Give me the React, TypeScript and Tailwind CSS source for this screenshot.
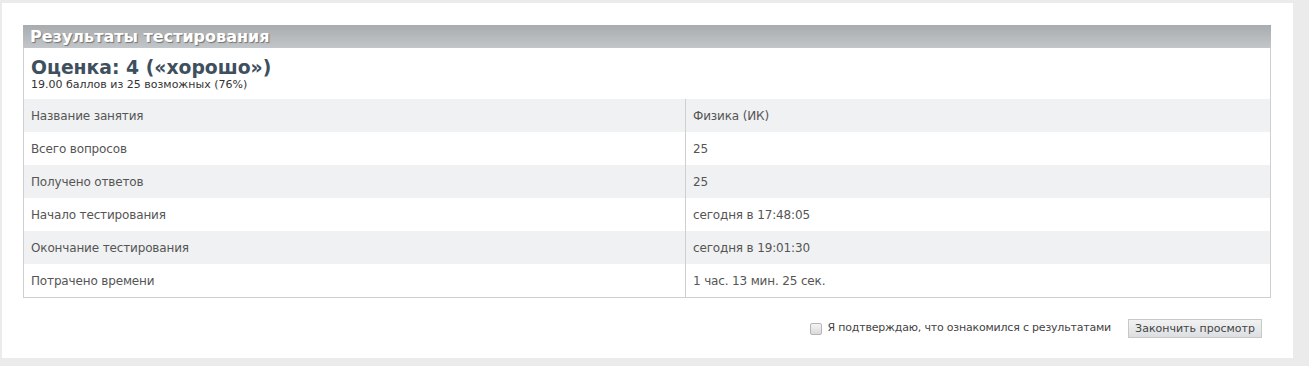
const rows = [
  { label: 'Название занятия', value: 'Физика (ИК)' },
  { label: 'Всего вопросов', value: '25' },
  { label: 'Получено ответов', value: '25' },
  { label: 'Начало тестирования', value: 'сегодня в 17:48:05' },
  { label: 'Окончание тестирования', value: 'сегодня в 19:01:30' },
  { label: 'Потрачено времени', value: '1 час. 13 мин. 25 сек.' },
]

export default function App() {
  return (
    <div className="min-h-[366px] bg-[#ebebeb] pt-[3px] pl-[2px] font-['DejaVu_Sans',Verdana,sans-serif]">
      <div className="flex h-[355px] w-[1291px] flex-col bg-white pt-[22px] pl-[21px]">
        <div className="w-[1248px] border-x border-b border-[#cfcfcf]">
          <div className="flex h-[23px] items-center bg-gradient-to-b from-[#a9acae] to-[#c3c6c8] px-[7px] -mx-px">
            <h2 className="text-[16px] font-bold leading-none text-white [text-shadow:1px_1px_1px_#6f7375]">
              Результаты тестирования
            </h2>
          </div>
          <div className="h-[51px] px-[7px] pt-[9px]">
            <div className="text-[18.8px] font-bold leading-[22px] text-[#3e4f5e]">Оценка: 4 («хорошо»)</div>
            <div className="text-[11px] leading-[12px] text-[#333]">19.00 баллов из 25 возможных (76%)</div>
          </div>
          <div>
            {rows.map((row, i) => (
              <div
                key={row.label}
                className={`grid h-[33px] grid-cols-[662px_1fr] items-center text-[12px] tracking-[-0.15px] text-[#555] ${i % 2 === 0 ? 'bg-[#f0f1f2]' : 'bg-white'}`}
              >
                <div className="flex h-full items-center border-r border-[#cfcfcf] px-[7px]">{row.label}</div>
                <div className="px-[7px]">{row.value}</div>
              </div>
            ))}
          </div>
        </div>
        <div className="flex w-[1248px] items-center justify-end gap-[17px] pt-[21px] pr-[9px]">
          <label className="flex items-center gap-[6px] text-[11px] tracking-[-0.2px] text-[#444]">
            <span className="h-[12px] w-[12px] rounded-[2px] border border-[#b5b5b5] bg-gradient-to-b from-[#f4f4f4] to-[#dadada]" />
            Я подтверждаю, что ознакомился с результатами
          </label>
          <button className="h-[19px] w-[134px] border border-[#c8c8c8] bg-gradient-to-b from-[#f2f2f2] to-[#dcdfe2] text-[11px] leading-none text-[#444]">
            Закончить просмотр
          </button>
        </div>
      </div>
    </div>
  )
}
